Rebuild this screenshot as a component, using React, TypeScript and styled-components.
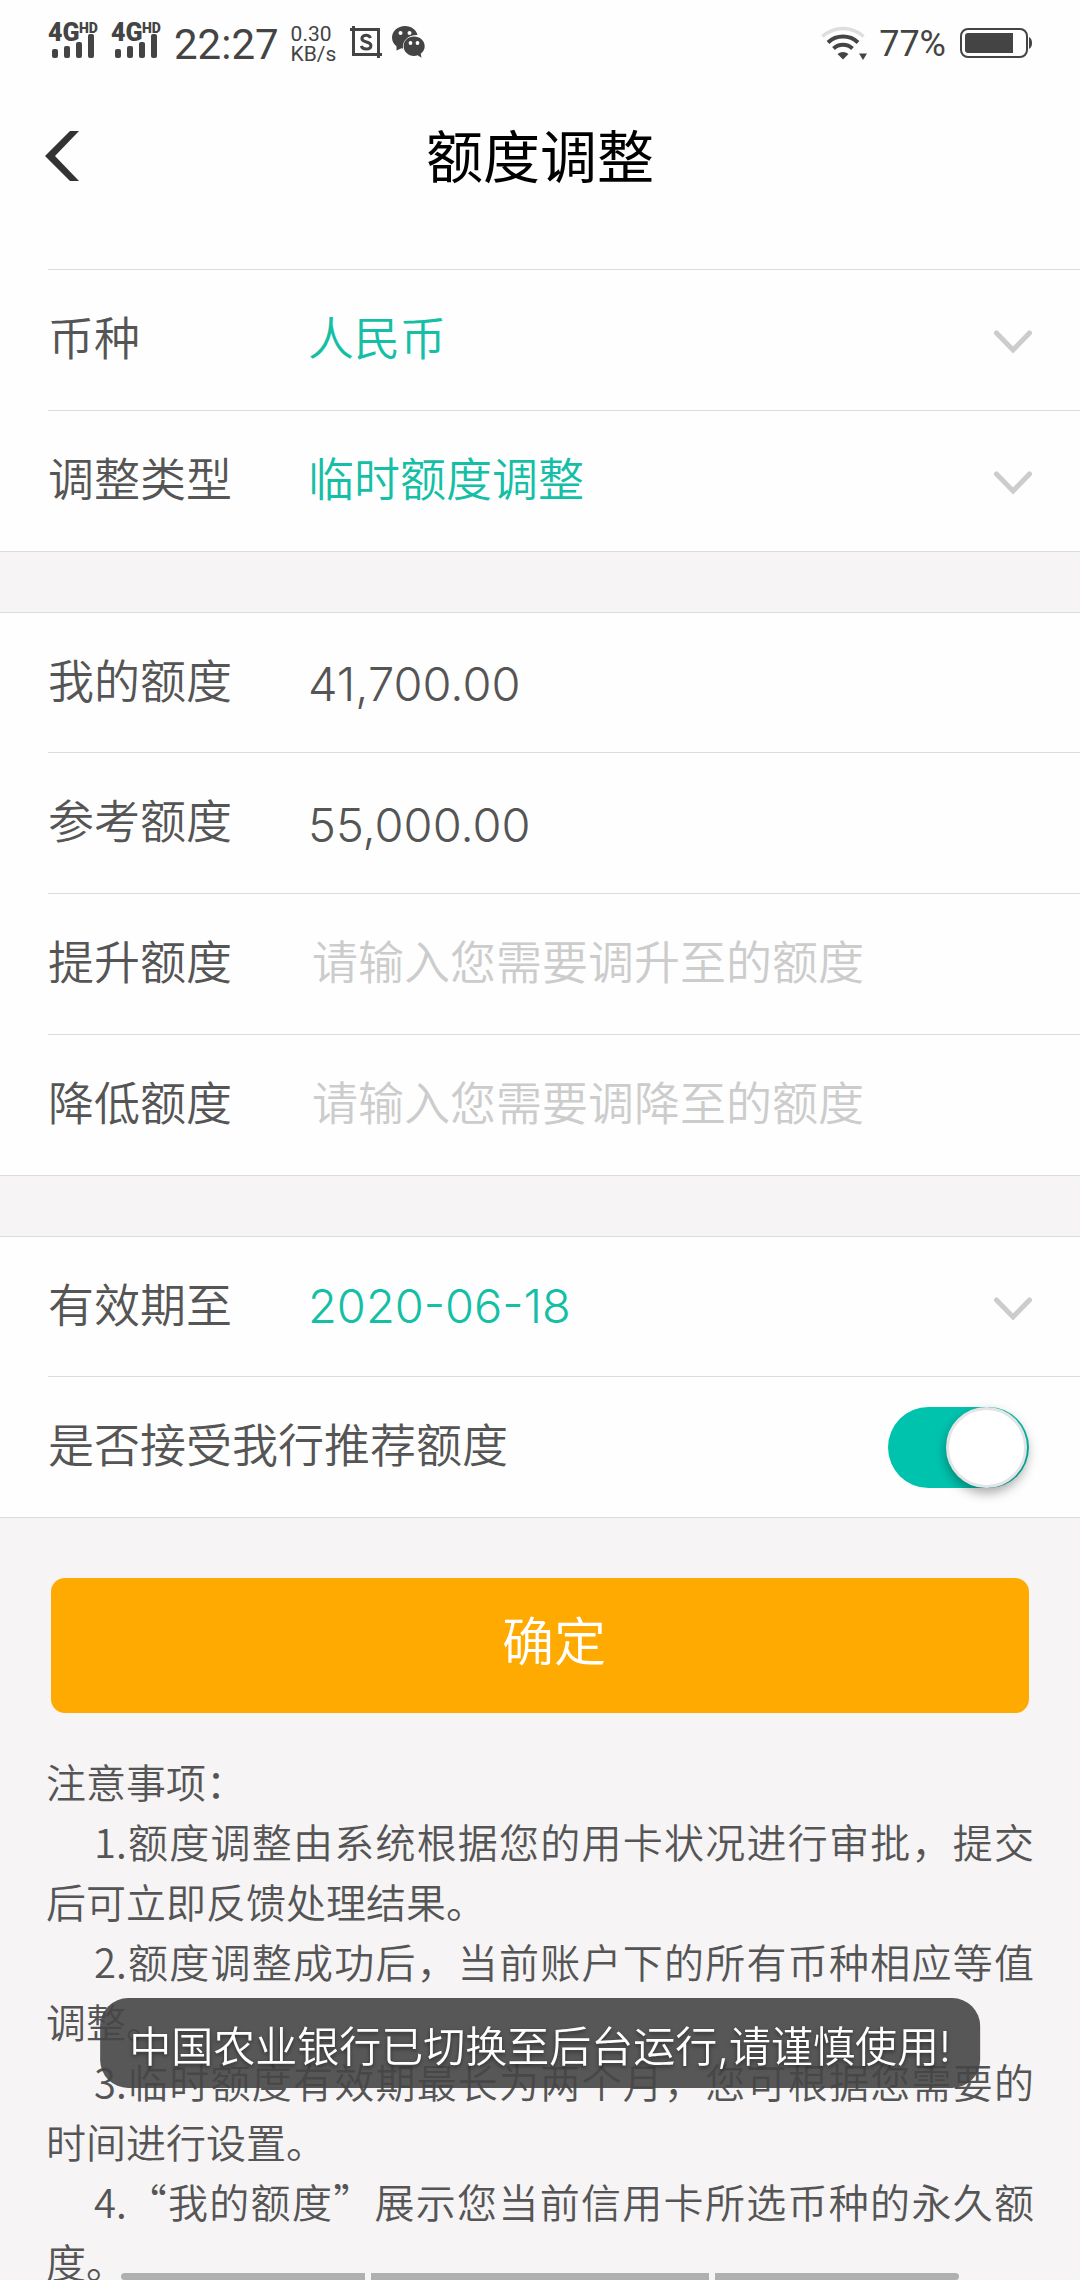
import React, { useState } from "react";
import styled, { createGlobalStyle } from "styled-components";

const colors = {
  text: "#555555",
  status: "#444444",
  accent: "#14bfa6",
  toggle: "#00c3ae",
  line: "#dcdcde",
  hint: "#cccccc",
  page: "#f6f4f5",
  action: "#ffaa00",
};

const cjk = `"Noto Sans CJK SC", sans-serif`;
const ui = `Inter, ${cjk}`;

const GlobalStyle = createGlobalStyle`
  *, *::before, *::after { box-sizing: border-box; }
  body { margin: 0; background: ${colors.page}; }
  button, input, select { font: inherit; color: inherit; margin: 0; padding: 0; border: 0; background: none; }
`;

const Screen = styled.div`
  height: 100vh;
  display: flex;
  flex-direction: column;
  overflow: hidden;
  background: ${colors.page};
  color: ${colors.text};
  font-family: ${ui};
  font-weight: 350;
  font-size: 46px;
`;

const StatusBar = styled.div`
  flex: none;
  display: flex;
  justify-content: space-between;
  align-items: center;
  height: 88px;
  padding: 0 48px;
  background: #fefefe;
  color: ${colors.status};
  font-family: Roboto, sans-serif;
  font-weight: 400;
`;

const StatusGroup = styled.div`
  display: flex;
  align-items: center;
  gap: 8px;

  svg {
    display: block;
  }
`;

const Clock = styled.span`
  padding-right: 4px;
  font-size: 42px;
`;

const Battery = styled.span`
  padding: 0 6px 0 4px;
  font-size: 36px;
`;

const Speed = styled.span`
  display: flex;
  flex-direction: column;
  padding-right: 6px;
  font-size: 21px;
  line-height: 20px;
`;

const TitleBar = styled.header`
  flex: none;
  display: grid;
  grid-template-columns: 120px 1fr 120px;
  align-items: center;
  height: 136px;
  background: #fefefe;
`;

const BackButton = styled.button`
  display: flex;
  align-items: center;
  height: 100%;
  padding-left: 44px;
`;

const Title = styled.h1`
  margin: 0;
  padding-top: 4px;
  text-align: center;
  font-size: 57px;
  font-weight: 400;
  line-height: 80px;
  color: #000;
`;

const Content = styled.main`
  flex: 1;
  min-height: 0;
  overflow-y: auto;
  scrollbar-width: none;
`;

const Section = styled.section<{ $first?: boolean }>`
  margin-bottom: 60px;
  padding-top: ${(p) => (p.$first ? "45px" : "0")};
  background: #fefefe;
  border-bottom: 1px solid ${colors.line};
  border-top: ${(p) => (p.$first ? "0" : `1px solid ${colors.line}`)};
`;

const Row = styled.div<{ $ruled?: boolean }>`
  display: flex;
  align-items: center;
  height: ${(p) => (p.$ruled ? "141px" : "139px")};
  margin-left: 48px;
  padding-right: 48px;
  border-top: ${(p) => (p.$ruled ? `1px solid ${colors.line}` : "0")};
`;

const Label = styled.label`
  flex: none;
  min-width: 260px;
  padding-bottom: 10px;
`;

const Value = styled.output`
  flex: 1;
  padding-top: 2px;
  font-size: 47px;
`;

const Select = styled.select<{ $numeric?: boolean }>`
  flex: 1;
  min-width: 0;
  padding-bottom: ${(p) => (p.$numeric ? "2px" : "4px")};
  appearance: none;
  outline: none;
  color: ${colors.accent};
  font-size: ${(p) => (p.$numeric ? "47px" : "46px")};
`;

const AmountInput = styled.input`
  flex: 1;
  min-width: 0;
  padding: 0 0 4px 4px;
  outline: none;

  &::placeholder {
    color: ${colors.hint};
    opacity: 1;
  }
`;

const Toggle = styled.input`
  appearance: none;
  flex: none;
  width: 141px;
  height: 81px;
  margin: 0 3px 0 auto;
  border-radius: 41px;
  background: ${colors.hint};
  cursor: pointer;

  &::before {
    content: "";
    display: block;
    width: 81px;
    height: 81px;
    border: 3px solid #e4e4e6;
    border-radius: 50%;
    background: #fff;
    box-shadow: 0 5px 12px rgba(0, 0, 0, 0.35);
  }

  &:checked {
    background: ${colors.toggle};
  }

  &:checked::before {
    margin-left: 58px;
  }
`;

const SubmitWrap = styled.div`
  padding: 0 51px;
`;

const Submit = styled.button`
  display: block;
  width: 100%;
  height: 135px;
  padding: 0 0 14px 28px;
  border-radius: 14px;
  background: ${colors.action};
  color: #fff;
  font-size: 52px;
`;

const Notes = styled.section`
  padding: 38px 46px 0;
  font-family: ${cjk};
  font-size: 40px;
  line-height: 60px;
`;

const NotesTitle = styled.h2`
  margin: 0;
  font: inherit;
`;

const Note = styled.p`
  margin: 0;
  text-indent: 48px;
  text-align: justify;
`;

const Toast = styled.div`
  position: fixed;
  left: 50%;
  bottom: 192px;
  transform: translateX(-50%);
  display: flex;
  align-items: center;
  height: 90px;
  padding: 0 29px;
  border-radius: 28px;
  background: rgba(70, 70, 70, 0.9);
  color: #fff;
  font-size: 42px;
  white-space: nowrap;
  text-shadow: 0 2px 4px rgba(0, 0, 0, 0.5);
`;

const GestureBar = styled.div`
  position: fixed;
  left: 0;
  right: 0;
  bottom: 0;
  display: grid;
  grid-template-columns: 244fr 338fr 244fr;
  gap: 6px;
  padding: 0 121px;
`;

const GestureSegment = styled.span`
  height: 7px;
  background: #b0b0b0;

  &:first-child {
    border-radius: 4px 0 0 4px;
  }

  &:last-child {
    border-radius: 0 4px 4px 0;
  }
`;

const SignalIcon = () => (
  <svg width="55" height="60" viewBox="0 -8 55 60" fill="currentColor" aria-hidden="true">
    <text x="0" y="19" fontSize="25" fontWeight="900">4G</text>
    <text x="31" y="11" fontSize="14" fontWeight="900">HD</text>
    <rect x="4" y="27" width="6" height="9" rx="2" />
    <rect x="16" y="24" width="6" height="12" rx="2" />
    <rect x="28" y="20" width="6" height="16" rx="2" />
    <rect x="40" y="12" width="6" height="24" rx="2" />
  </svg>
);

const ScreenshotIcon = () => (
  <svg width="34" height="36" viewBox="0 0 34 36" fill="none" stroke="currentColor" strokeWidth="3" aria-hidden="true">
    <path d="M0 3.500h28.500V32M3.500 0v28.500H32" />
    <path d="M20.500 12c-.8-2-2.200-2.800-4.300-2.800-2.600 0-4.300 1.300-4.300 3.300 0 4.700 9 2.300 9 7 0 2.200-1.900 3.500-4.700 3.500-2.500 0-4.300-1.100-4.900-3.200" />
  </svg>
);

const WeChatIcon = () => (
  <svg width="34" height="38" viewBox="0 0 34 38" fill="currentColor" aria-hidden="true">
    <path d="M13 1C6 1 0 6 0 12.500c0 3.800 1.800 6.800 4.500 8.800L4.500 25.500l5-2.300c.6.200 1 .3 1.500.3C10 16 16 9.800 25.500 10 24.500 5 19.500 1 13 1z" />
    <path d="M22 11.500c-5.800 0-10.400 4.200-10.400 9.700 0 5.400 4.600 9.700 10.400 9.700 1.300 0 2.600-.2 3.700-.6l3.800 2.500-.8-4c2.400-1.800 4-4.500 4-7.600 0-5.500-4.900-9.700-10.700-9.700z" />
    <g fill="#fefefe">
      <circle cx="8.500" cy="8" r="2" />
      <circle cx="17.500" cy="8" r="2" />
      <circle cx="18.500" cy="18" r="1.900" />
      <circle cx="25.500" cy="18" r="1.900" />
    </g>
  </svg>
);

const WifiIcon = () => (
  <svg width="46" height="36" viewBox="0 0 46 36" fill="none" stroke="currentColor" strokeWidth="4" aria-hidden="true">
    <path d="M1.500 10.500a30 30 0 0 1 41 0" stroke="#dedede" strokeWidth="3.500" />
    <path d="M7 16.500a22 22 0 0 1 30 0" />
    <path d="M12.500 22.500a14 14 0 0 1 19 0" />
    <path d="M22 33.500l-5.500-5.500q5.500-4 11 0z" fill="currentColor" stroke="none" />
    <path d="M38 27.500h8l-4 6.500z" fill="currentColor" stroke="none" />
  </svg>
);

const BatteryIcon = () => (
  <svg width="72" height="32" viewBox="0 0 72 32" fill="currentColor" aria-hidden="true">
    <rect x="1" y="1" width="66" height="28" rx="7" fill="none" stroke="currentColor" strokeWidth="2" />
    <path d="M8 5h45v20H8a3 3 0 0 1-3-3V8a3 3 0 0 1 3-3z" />
    <path d="M69 9c2 1 3 3 3 6s-1 5-3 6z" />
  </svg>
);

const BackIcon = () => (
  <svg width="36" height="50" viewBox="0 0 36 50" fill="#333" aria-hidden="true">
    <path d="M26 0h9L11 25l24 25h-9L1 25z" />
  </svg>
);

const ChevronIcon = () => (
  <svg width="38" height="30" viewBox="0 0 38 30" fill="none" stroke={colors.hint} strokeWidth="5" strokeLinecap="round" aria-hidden="true">
    <path d="M2.500 8L19 25 35.500 8" />
  </svg>
);

type PickerProps = { id: string; label: string; value: string; ruled?: boolean; numeric?: boolean };

const PickerRow = ({ id, label, value, ruled, numeric }: PickerProps) => (
  <Row $ruled={ruled}>
    <Label htmlFor={id}>{label}</Label>
    <Select id={id} defaultValue={value} $numeric={numeric}>
      <option value={value}>{value}</option>
    </Select>
    <ChevronIcon />
  </Row>
);

const notes = [
  "1.额度调整由系统根据您的用卡状况进行审批，提交后可立即反馈处理结果。",
  "2.额度调整成功后，当前账户下的所有币种相应等值调整。",
  "3.临时额度有效期最长为两个月，您可根据您需要的时间进行设置。",
  "4.“我的额度”展示您当前信用卡所选币种的永久额度。",
];

export default function App() {
  const [accept, setAccept] = useState(true);
  const [raise, setRaise] = useState("");
  const [lower, setLower] = useState("");

  return (
    <Screen lang="zh-CN">
      <GlobalStyle />
      <StatusBar>
        <StatusGroup>
          <SignalIcon />
          <SignalIcon />
          <Clock>22:27</Clock>
          <Speed>
            <span>0.30</span>
            <span>KB/s</span>
          </Speed>
          <ScreenshotIcon />
          <WeChatIcon />
        </StatusGroup>
        <StatusGroup>
          <WifiIcon />
          <Battery>77%</Battery>
          <BatteryIcon />
        </StatusGroup>
      </StatusBar>

      <TitleBar>
        <BackButton type="button" aria-label="返回">
          <BackIcon />
        </BackButton>
        <Title>额度调整</Title>
      </TitleBar>

      <Content>
        <Section $first>
          <PickerRow id="currency" label="币种" value="人民币" ruled />
          <PickerRow id="kind" label="调整类型" value="临时额度调整" ruled />
        </Section>

        <Section>
          <Row>
            <Label htmlFor="mine">我的额度</Label>
            <Value id="mine">41,700.00</Value>
          </Row>
          <Row $ruled>
            <Label htmlFor="reference">参考额度</Label>
            <Value id="reference">55,000.00</Value>
          </Row>
          <Row $ruled>
            <Label htmlFor="raise">提升额度</Label>
            <AmountInput
              id="raise"
              inputMode="decimal"
              placeholder="请输入您需要调升至的额度"
              value={raise}
              onChange={(e) => setRaise(e.target.value)}
            />
          </Row>
          <Row $ruled>
            <Label htmlFor="lower">降低额度</Label>
            <AmountInput
              id="lower"
              inputMode="decimal"
              placeholder="请输入您需要调降至的额度"
              value={lower}
              onChange={(e) => setLower(e.target.value)}
            />
          </Row>
        </Section>

        <Section>
          <PickerRow id="expiry" label="有效期至" value="2020-06-18" numeric />
          <Row $ruled>
            <Label htmlFor="accept">是否接受我行推荐额度</Label>
            <Toggle
              id="accept"
              type="checkbox"
              role="switch"
              checked={accept}
              onChange={(e) => setAccept(e.target.checked)}
            />
          </Row>
        </Section>

        <SubmitWrap>
          <Submit type="button">确定</Submit>
        </SubmitWrap>

        <Notes>
          <NotesTitle>注意事项：</NotesTitle>
          {notes.map((note) => (
            <Note key={note}>{note}</Note>
          ))}
        </Notes>
      </Content>

      <Toast role="status">中国农业银行已切换至后台运行,请谨慎使用!</Toast>
      <GestureBar>
        <GestureSegment />
        <GestureSegment />
        <GestureSegment />
      </GestureBar>
    </Screen>
  );
}
